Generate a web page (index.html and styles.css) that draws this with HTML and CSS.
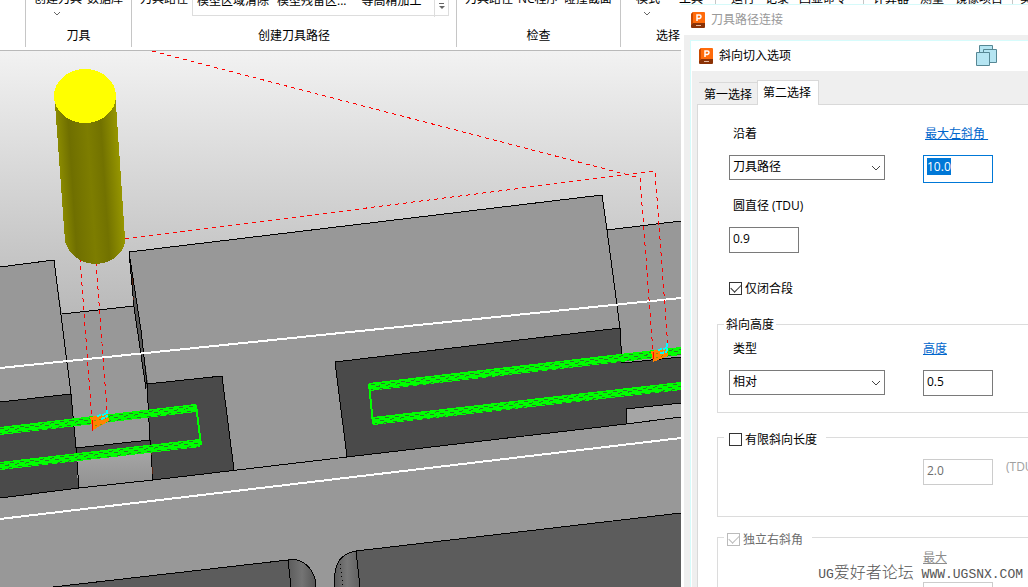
FILE: index.html
```html
<!DOCTYPE html>
<html lang="zh-CN">
<head>
<meta charset="utf-8">
<title>斜向切入选项</title>
<link rel="stylesheet" href="styles.css">
</head>
<body>
<div class="app">
  <header class="ribbon">
    <div class="group group-edge"></div>
    <section class="group group-tool">
      <div class="items"><span>创建刀具</span><span>数据库</span></div>
      <svg class="more" viewBox="0 0 8 5"><path d="M1 1l3 3 3-3"/></svg>
      <h2 class="group-name">刀具</h2>
    </section>
    <section class="group group-create">
      <div class="items">
        <span>刀具路径</span>
        <div class="gallery">
          <span>模型区域清除</span><span>模型残留区...</span><span class="wide">等高精加工</span>
          <svg class="gallery-more" viewBox="0 0 14 24"><path class="rule" d="M.5 0v24"/><path class="mark" d="M5 10.500h5"/><path class="tip" d="M5 13h6l-3 3z"/></svg>
        </div>
      </div>
      <h2 class="group-name">创建刀具路径</h2>
    </section>
    <section class="group group-check">
      <div class="items"><span>刀具路径</span><span>NC程序</span><span>碰撞截面</span></div>
      <h2 class="group-name">检查</h2>
    </section>
    <section class="group group-select">
      <div class="items"><span>模式</span><span>工具</span></div>
      <svg class="more" viewBox="0 0 8 5"><path d="M1 1l3 3 3-3"/></svg>
      <h2 class="group-name">选择</h2>
    </section>
    <section class="group group-macro">
      <div class="items"><span>运行</span><span>记录</span><span>回显命令</span></div>
    </section>
    <section class="group group-util">
      <div class="items"><span>计算器</span><span>测量</span><span>镜像项目</span></div>
    </section>
    <section class="group group-last">
      <div class="items"><span>实体</span></div>
    </section>
  </header>

  <main class="viewport">
    <svg class="scene" viewBox="0 51 1028 536" preserveAspectRatio="xMinYMin slice" shape-rendering="crispEdges" role="img" aria-label="刀具路径视图">
      <defs>
        <linearGradient id="sky" gradientUnits="userSpaceOnUse" x1="0" y1="51" x2="0" y2="587"><stop offset="0" stop-color="#f2f2f2"/><stop offset=".5" stop-color="#b8b8b8"/><stop offset="1" stop-color="#808080"/></linearGradient>
        <linearGradient id="shaft" gradientUnits="userSpaceOnUse" x1="59" y1="170" x2="121" y2="166"><stop offset="0" stop-color="#8c8c00"/><stop offset=".2" stop-color="#6f6f00"/><stop offset=".5" stop-color="#7d7d00"/><stop offset=".72" stop-color="#727200"/><stop offset="1" stop-color="#989800"/></linearGradient>
        <linearGradient id="floor" x1="0" y1="0" x2="0" y2="1"><stop offset="0" stop-color="#a6a6a6"/><stop offset="1" stop-color="#919191"/></linearGradient>
        <linearGradient id="filletA"><stop offset="0" stop-color="#5b5b5b"/><stop offset=".5" stop-color="#747474"/><stop offset="1" stop-color="#555"/></linearGradient>
        <linearGradient id="filletB"><stop offset="0" stop-color="#5a5a5a"/><stop offset=".5" stop-color="#787878"/><stop offset="1" stop-color="#606060"/></linearGradient>
      </defs>
      <rect y="51" width="1028" height="536" fill="url(#sky)"/>

      <path class="metal" d="M0 267L54 260L62 314L134 306L129 252L602 195L607 230L681 221V587H0z"/>
      <path class="pocket" d="M0 402L71 394L76 448L78 488L0 498z"/>
      <path class="pocket" d="M76 448L150 440L152 453L77 460z"/>
      <path fill="url(#floor)" d="M77 460L151 450L153 480L79 488z"/>
      <path class="pocket" d="M147 384L222 376L234 470L153 480z"/>
      <path fill="#595959" d="M129 252L134 307L146 389L148 384L141 330z"/>
      <path class="pocket" d="M335 362L620 328L622 363L681 357V403L626 409V424L347 457z"/>
      <path fill="#a5a5a5" d="M626 409L681 403V417L626 424z"/>
      <path fill="#5c5c5c" d="M53 587L288 560L291 587zM356 551L681 513V587H360z"/>
      <path fill="url(#filletA)" d="M288 560C304 557 316 571 316 587H291z"/>
      <path fill="url(#filletB)" d="M356 551C337 554 333 569 335 587H360z"/>

      <g class="edge">
        <path d="M0 267L54 260L71 394L76 448L150 440L147 384L141 330L129 252L602 195L607 230L681 221"/>
        <path d="M62 314L134 306M129 252L134 307L146 389M0 402L71 394M76 448L79 488M147 384L222 376L234 470M150 440L153 480"/>
        <path d="M0 498L79 488L153 480L347 457L626 424L681 417M335 362L620 328L622 363L681 357M335 362L347 457M607 230L620 328M626 424V409L681 403"/>
        <path d="M53 587L288 560C304 557 316 571 316 587M288 560L291 587M335 587C333 569 337 554 356 551L681 513M356 551L360 587"/>
        <path stroke-dasharray="1 3" d="M340 564L343 587"/>
      </g>
      <path stroke="#5a2410" stroke-dasharray="7 12" fill="none" d="M132 278L134 300M151 448L153 478"/>
      <g class="boundary"><path d="M0 368L681 298M0 519L681 438"/></g>

      <g class="cut">
        <path d="M0 431L196 408M0 466L200 443M369 387L681 351M373 421L681 386"/>
      </g>
      <g class="cut-link"><path d="M196 405L201 445M369 384L373 424"/></g>
      <g class="cut-gap">
        <path d="M0 429L194 406M0 464L198 441M371 385L681 349M375 419L681 384"/>
        <path stroke-dashoffset="5" d="M0 431L194 408M0 466L198 443M371 387L681 351M375 421L681 386"/>
        <path stroke-dashoffset="2" d="M0 434L194 411M0 469L198 446M371 390L681 354M375 424L681 389"/>
      </g>

      <g class="rapid">
        <path d="M152 51L640 178L653 352M125 239L655 171L668 348"/>
        <path d="M80 258L92 420M96 262L107 411"/>
      </g>
      <path class="plunge" d="M90 417l18-3 1 7-16 9zM651 351l17-3 0 8-15 6z"/>
      <path class="plunge-gap" d="M94 421l14-3M95 426l10-3M656 354l12-2M656 358l9-3"/>
      <path class="lead" d="M97 416l9-2M101 419l6-2M107 410v7M658 350l9-2M660 353l7-1M667 343v8"/>
      <path stroke="#f00" d="M92 420v11M653 352v7"/>

      <path fill="url(#shaft)" d="M54.500 97L65 241C68 254 81 264 95 264C112 264 126 252 125 238L115.500 97z"/>
      <ellipse cx="85" cy="96" rx="31" ry="27" fill="#ff0"/>
    </svg>
  </main>

  <section class="window outer" aria-label="刀具路径连接">
    <header class="title title-idle">
      <svg class="logo" viewBox="0 0 14 16"><path fill="#ff6b0b" d="M2 0h11q1 0 1 1v12H0V2z"/><path fill="#c94a00" d="M0 2l2-2v11L0 13z"/><path fill="#8b3206" d="M2 11h12v4q0 1-1 1H1q-1 0-1-1v-2z"/><path fill="none" stroke="#fff" stroke-width="1.500" d="M6 9V3h2.500q1.500 0 1.500 1.500T8.500 6.500H6"/><path stroke="#e5b9a0" d="M5 13.500h5"/></svg>
      <h1>刀具路径连接</h1>
    </header>
    <div class="outer-body">
      <section class="inner" aria-label="斜向切入选项">
        <header class="title">
          <svg class="logo" viewBox="0 0 14 16"><path fill="#ff6b0b" d="M2 0h11q1 0 1 1v12H0V2z"/><path fill="#c94a00" d="M0 2l2-2v11L0 13z"/><path fill="#8b3206" d="M2 11h12v4q0 1-1 1H1q-1 0-1-1v-2z"/><path fill="none" stroke="#fff" stroke-width="1.500" d="M6 9V3h2.500q1.500 0 1.500 1.500T8.500 6.500H6"/><path stroke="#e5b9a0" d="M5 13.500h5"/></svg>
          <h1>斜向切入选项</h1>
          <button class="copy" type="button" aria-label="复制">
            <svg viewBox="0 0 22 22" fill="#b5e5f2" stroke="#568794"><path d="M3.500.500h13v13h-13z"/><path d="M7.500 4.500h13v13h-13z"/><path d="M.500 7.500h13v13H.500z"/></svg>
          </button>
        </header>
        <form class="inner-body">
          <div class="tabs" role="tablist">
            <button class="tab" type="button" role="tab" aria-selected="false">第一选择</button>
            <button class="tab tab-on" type="button" role="tab" aria-selected="true">第二选择</button>
          </div>
          <div class="panel" role="tabpanel">
            <div class="fields fields-main">
              <label class="name" for="along">沿着</label>
              <a class="name link" href="#angle">最大左斜角&nbsp;</a>
              <div class="pick"><select id="along"><option>刀具路径</option></select><svg viewBox="0 0 10 6"><path d="M1 1l4 4 4-4"/></svg></div>
              <input class="box box-active" id="angle" type="text" value="10.0" aria-label="最大左斜角">
              <label class="name" for="diameter">圆直径 (TDU)</label><span></span>
              <input class="box" id="diameter" type="text" value="0.9">
            </div>
            <label class="check check-closed"><input type="checkbox" checked>仅闭合段</label>

            <fieldset class="set">
              <legend class="legend-text">斜向高度</legend>
              <div class="fields fields-height">
                <label class="name" for="kind">类型</label>
                <a class="name link" href="#height">高度</a>
                <div class="pick"><select id="kind"><option>相对</option></select><svg viewBox="0 0 10 6"><path d="M1 1l4 4 4-4"/></svg></div>
                <input class="box" id="height" type="text" value="0.5" aria-label="高度">
              </div>
            </fieldset>

            <fieldset class="set set-length">
              <legend><label class="check"><input type="checkbox">有限斜向长度</label></legend>
              <div class="fields fields-length">
                <span></span>
                <input class="box" type="text" value="2.0" disabled aria-label="长度">
                <span class="unit">(TDU)</span>
              </div>
            </fieldset>

            <fieldset class="set set-right">
              <legend><label class="check check-off"><input type="checkbox" checked disabled>独立右斜角</label></legend>
              <div class="fields fields-right">
                <span></span>
                <label class="name name-off" for="right">最大</label>
                <span></span>
                <input class="box" id="right" type="text" disabled>
              </div>
            </fieldset>
          </div>
        </form>
      </section>
    </div>
  </section>
  <p class="mark-line"><span class="latin">UG</span>爱好者论坛<span class="latin"> WWW.UGSNX.COM</span></p>
</div>
<script src="app.js"></script>
</body>
</html>
```

FILE: styles.css
```css
* { box-sizing: border-box; }

body {
  margin: 0;
  font: 12px/16px "Open Sans", "Noto Sans CJK SC", sans-serif;
  color: #000;
}

h1, h2, p { margin: 0; font-size: 12px; font-weight: 400; }

.app {
  position: relative;
  display: flex;
  flex-direction: column;
  height: 100vh;
  overflow: hidden;
}

/* Ribbon */
.ribbon {
  display: flex;
  align-items: flex-end;
  flex: none;
  height: 51px;
  overflow: hidden;
  padding-bottom: 3px;
  border-bottom: 1px solid #b9b9b9;
  background: #fff;
  white-space: nowrap;
}
.group {
  flex: none;
  display: flex;
  flex-direction: column;
  align-items: center;
  justify-content: space-between;
  height: 56px;
  padding-bottom: 3px;
  border-right: 1px solid #c6c6c6;
}
.items { display: flex; align-self: stretch; gap: 5px; height: 16px; }
.group-edge { width: 26px; }
.group-tool { width: 106px; }
.group-tool .items { padding-left: 8px; }
.group-create { width: 325px; }
.group-create .items { padding-left: 8px; }
.group-check { width: 164px; }
.group-check .items { padding-left: 8px; }
.group-select { width: 95px; }
.group-select .items { padding-left: 15px; gap: 19px; }
.group-macro { width: 148px; }
.group-macro .items { padding-left: 15px; gap: 10px; }
.group-util { width: 149px; }
.group-util .items { padding-left: 9px; gap: 11px; }
.group-last { border: 0; }
.group-last .items { padding-left: 7px; }
.more { width: 8px; height: 5px; align-self: flex-start; margin: 0 0 8px 27px; fill: none; stroke: #666; }
.group-select .more { margin-left: 22px; }
.gallery {
  display: flex;
  gap: 8px;
  width: 257px;
  height: 25px;
  margin-left: -1px;
  padding: 1px 0 0 4px;
  border: 1px solid #ddd;
}
.gallery .wide { margin-left: 7px; }
.gallery-more { width: 14px; height: 24px; margin-left: auto; fill: none; }
.rule { stroke: #ddd; }
.mark { stroke: #666; }
.tip { fill: #666; }

/* 3D view */
.viewport { flex: 1; min-height: 0; overflow: hidden; }
.scene { display: block; width: 100%; height: 100%; }
.metal { fill: #989898; }
.pocket { fill: #4a4a4a; }
.edge { fill: none; stroke: #000; }
.boundary { stroke: #fff; stroke-width: 2; }
.cut { stroke: #0f0; stroke-width: 8; }
.cut-link { stroke: #0f0; stroke-width: 2; }
.cut-gap { stroke: #2c7a2c; stroke-dasharray: 4 6; }
.rapid { fill: none; stroke: #f00; stroke-dasharray: 4 4; }
.plunge { fill: #ff8200; }
.plunge-gap { stroke: #7f9d00; stroke-dasharray: 2 3; }
.lead { stroke: #0ff; stroke-width: 2; stroke-dasharray: 4 1; }

/* Dialogs */
.window {
  position: absolute;
  inset: 4px 0 0 681px;
  display: flex;
  flex-direction: column;
  background: #fff;
  white-space: nowrap;
}
.title { display: flex; align-items: center; gap: 6px; flex: none; height: 31px; padding-left: 10px; }
.title-idle { color: #999; border-top: 1px solid #d6fafa; }
.logo { width: 14px; height: 16px; }
.outer-body { flex: 1; min-height: 0; margin-left: 3px; padding: 5px 0 0 6px; background: #efefef; }
.inner { display: flex; flex-direction: column; height: 100%; border: solid #d6fcfc; border-width: 1px 0 0 1px; background: #fff; }
.inner .title { height: 30px; padding-left: 8px; }
.inner h1 { flex: 1; }
.copy { width: 22px; height: 22px; margin-right: 30px; padding: 0; border: 0; background: none; }
.copy svg { display: block; }
.inner-body { flex: 1; min-height: 0; margin-left: 1px; padding: 9px 0 0 5px; background: #efefef; }

.tabs { position: relative; display: flex; align-items: flex-end; height: 25px; margin-bottom: -1px; padding-left: 2px; }
.tab {
  height: 23px;
  width: 58px;
  padding: 2px 0 0;
  border: 0;
  border-top: 1px solid #d9d9d9;
  background: none;
  font: inherit;
  color: inherit;
}
.tab-on { width: 62px; height: 25px; padding: 0 2px 0 0; border: 1px solid #d9d9d9; border-bottom: 0; background: #fff; }
.panel { height: 100%; padding: 19px 0 0 19px; border: solid #d9d9d9; border-width: 1px 0 0 1px; background: #fff; overflow: hidden; }

.fields { display: grid; grid-template-columns: 156px 70px 1fr; column-gap: 38px; row-gap: 13px; align-items: start; }
.fields > * { min-width: 0; }
.fields-main, .fields-height, .fields-right { grid-template-columns: 156px 70px; }
.fields-main { padding-left: 12px; }
.fields-height { padding: 6px 0 16px 11px; }
.fields-length { padding: 11px 0 31px 11px; }
.fields-right { padding: 0 0 20px 11px; row-gap: 16px; }
.name { padding: 2px 0 0 4px; }
.link { padding-left: 0; color: #0066cc; text-decoration: underline; justify-self: start; }
.fields-main .link { padding-left: 2px; }
.name-off { padding-left: 0; color: #8c8c8c; text-decoration: underline; }
.unit { margin-left: -25px; color: #a0a0a0; }

.pick { position: relative; }
.pick svg { position: absolute; right: 4px; top: 10px; width: 10px; height: 6px; fill: none; stroke: #444; pointer-events: none; }
select {
  appearance: none;
  display: block;
  width: 100%;
  height: 25px;
  padding: 0 20px 2px 3px;
  border: 1px solid #7a7a7a;
  border-radius: 0;
  background: #fff;
  font: inherit;
  color: #000;
}
.box {
  width: 70px;
  height: 26px;
  padding: 0 3px 3px;
  border: 1px solid #7a7a7a;
  border-radius: 0;
  background: #fff;
  font: inherit;
  color: #000;
  outline: 0;
}
.box:disabled { border-color: #ccc; color: #6d6d6d; }
.box-active { height: 28px; padding-bottom: 5px; border-color: #0078d7; }
.box::selection { background: #0078d7; color: #fff; }

.check { display: flex; align-items: center; gap: 3px; }
.check-closed { margin: 28px 0 0 12px; }
.check-off { color: #6d6d6d; }
.check input {
  appearance: none;
  display: grid;
  place-items: center;
  width: 13px;
  height: 13px;
  margin: 0 0 2px;
  border: 1px solid #333;
  background: #fff;
}
.check input:checked::after {
  content: "";
  width: 9px;
  height: 5px;
  margin-top: -3px;
  border: solid #333;
  border-width: 0 0 1px 1px;
  transform: rotate(-45deg);
}
.check input:disabled, .check input:disabled::after { border-color: #bbb; }

.set { min-width: 0; margin: 0; padding: 0; border: 1px solid #dcdcdc; border-right: 0; }
.check-closed + .set { margin-top: 18px; }
.set-length { margin-top: 14px; }
.set-right { margin-top: 10px; }
legend { margin-left: 6px; padding: 5px 9px 0 5px; }
.legend-text { padding: 2px 2px 0; }
.set-right legend { padding-left: 3px; }

/* Watermark */
.mark-line {
  position: absolute;
  right: 5px;
  bottom: 4px;
  font: 16px/16px "Noto Sans CJK SC", sans-serif;
  font-weight: 300;
  color: #555;
  white-space: pre;
}
.latin { font: 13px/16px "Liberation Mono", monospace; }
```

FILE: app.js
```js
const angle = document.getElementById("angle");
angle.focus({ preventScroll: true });
angle.select();
```
